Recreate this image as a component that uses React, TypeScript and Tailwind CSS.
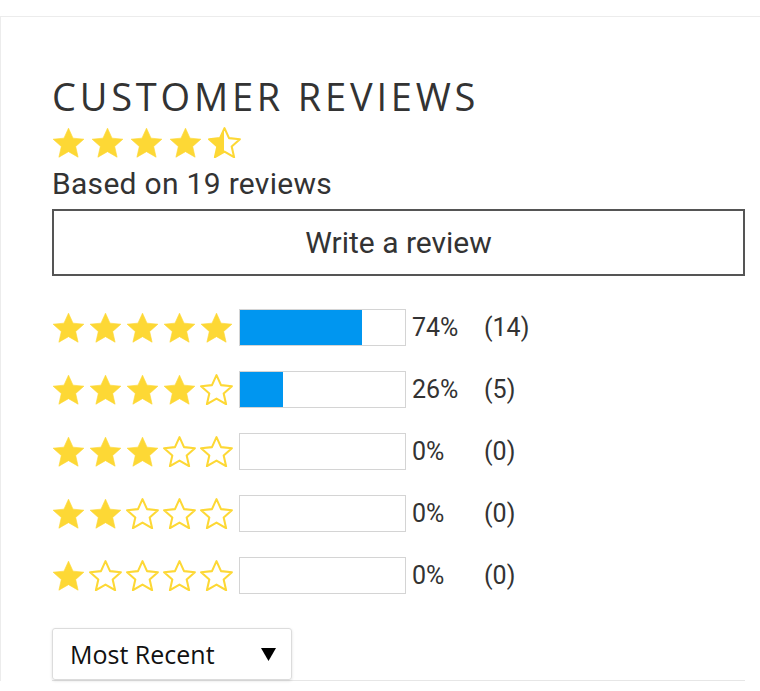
import React from "react";

const rows = [
  { stars: 5, pct: 74, count: 14 },
  { stars: 4, pct: 26, count: 5 },
  { stars: 3, pct: 0, count: 0 },
  { stars: 2, pct: 0, count: 0 },
  { stars: 1, pct: 0, count: 0 },
];

const STAR = "M12 2.6l2.85 6.3 6.85.65-5.17 4.6 1.52 6.75L12 17.4l-6.05 3.5 1.52-6.75L2.3 9.55l6.85-.65z";

function Star({ kind, size }: { kind: "full" | "empty" | "half"; size: number }) {
  return (
    <svg width={size} height={size * 0.95} viewBox="1.6 1.9 20.8 19.7" className="shrink-0">
      {kind === "half" && (
        <defs>
          <linearGradient id="halfFill" x1="0" x2="1" y1="0" y2="0">
            <stop offset="0.5" stopColor="#fdd835" />
            <stop offset="0.5" stopColor="#ffffff" />
          </linearGradient>
        </defs>
      )}
      <path
        d={STAR}
        fill={kind === "full" ? "#fdd835" : kind === "half" ? "url(#halfFill)" : "none"}
        stroke="#fdd835"
        strokeWidth={kind === "full" ? 0.4 : 1.3}
        strokeLinejoin="round"
      />
    </svg>
  );
}

export default function App() {
  return (
    <div className="min-h-screen bg-white pt-4" style={{ fontFamily: "Roboto, sans-serif" }}>
      <div className="border-t border-l border-[#ececec] pl-[51px] pr-4 pt-[56px]">
        <h2
          className="text-[38px] leading-[46px] tracking-[0.1em] text-[#333]"
          style={{ fontFamily: "'Open Sans', sans-serif" }}
        >
          CUSTOMER REVIEWS
        </h2>

        <div className="flex items-center gap-[6px] mt-[8px]">
          {[0, 1, 2, 3].map((i) => (
            <Star key={i} kind="full" size={33} />
          ))}
          <Star kind="half" size={33} />
        </div>

        <p className="text-[30px] leading-[36px] tracking-[0.01em] text-[#333] mt-[8px]">Based on 19 reviews</p>

        <button className="mt-[7px] w-[693px] h-[67px] border-2 border-[#555] text-[30px] text-[#333] bg-white">
          Write a review
        </button>

        <div className="mt-[33px] flex flex-col gap-[26px]">
          {rows.map((r) => (
            <div key={r.stars} className="flex items-center h-[36px]">
              <div className="flex items-center gap-[4px] w-[187px]">
                {[0, 1, 2, 3, 4].map((i) => (
                  <Star key={i} kind={i < r.stars ? "full" : "empty"} size={33} />
                ))}
              </div>
              <div className="w-[167px] h-[37px] border border-[#d4d4d4] bg-white">
                <div className="h-full bg-[#0096f0]" style={{ width: `${r.pct}%` }} />
              </div>
              <span className="ml-[6px] w-[72px] text-[25px] text-[#333]">{r.pct}%</span>
              <span className="text-[25px] text-[#333]">({r.count})</span>
            </div>
          ))}
        </div>

        <div className="mt-[35px] w-[693px] border-b border-[#e6e6e6]">
          <div
            className="w-[240px] h-[52px] border border-[#dcdcdc] rounded-[3px] shadow-[0_1px_3px_rgba(0,0,0,0.12)] flex items-center justify-between pl-[17px] pr-[15px]"
            style={{ fontFamily: "'Open Sans', sans-serif" }}
          >
            <span className="text-[25px] text-[#111]">Most Recent</span>
            <svg width="15" height="13" viewBox="0 0 15 13">
              <path d="M0 0h15L7.5 13z" fill="#000" />
            </svg>
          </div>
        </div>
      </div>
    </div>
  );
}
